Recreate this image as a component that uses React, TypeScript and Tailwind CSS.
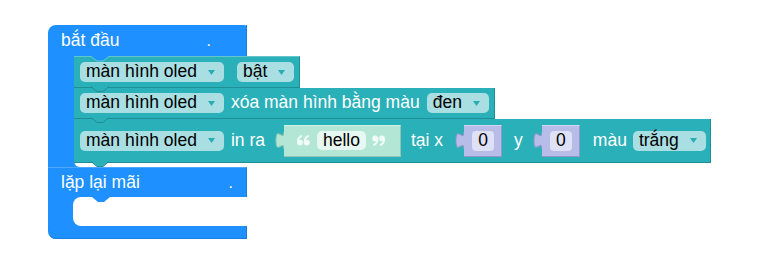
import React from "react";

function Arrow() {
  return (
    <svg width="7" height="5" viewBox="0 0 7 5" className="ml-[11px] shrink-0">
      <polygon points="0,0 7,0 3.5,5" fill="#29adb5" />
    </svg>
  );
}

function Dropdown({ label, className = "" }: { label: string; className?: string }) {
  return (
    <div
      className={
        "flex items-center h-[20px] rounded-[5px] bg-[#a9dfe2] pl-[6px] pr-[9px] text-[17.5px] text-black shrink-0 whitespace-nowrap " +
        className
      }
    >
      <span className="leading-none">{label}</span>
      <Arrow />
    </div>
  );
}

function Label({ text, className = "" }: { text: string; className?: string }) {
  return <span className={"text-white text-[17.5px] leading-none whitespace-nowrap shrink-0 " + className}>{text}</span>;
}

function TealNotch() {
  return (
    <svg className="absolute left-[17px] top-full -mt-[1px] z-10" width="18" height="6" viewBox="0 0 18 6">
      <polygon points="0,0 6,5.5 12,5.5 18,0" fill="#2ab0b8" />
      <polyline points="0,0.5 6,5.5 12,5.5 18,0.5" fill="none" stroke="#1f8f95" strokeWidth="1" />
    </svg>
  );
}

function Tab({ fill, stroke }: { fill: string; stroke: string }) {
  return (
    <div className="w-[8px] h-[32px] pt-[7px] shrink-0">
      <svg width="8" height="17" viewBox="0 0 8 15" preserveAspectRatio="none" className="overflow-visible">
        <path d="M8,0 C8,9 0,-6 0,7.5 C0,21 8,6 8,15 Z" fill={fill} />
        <path d="M8,0 C8,9 0,-6 0,7.5 C0,21 8,6 8,15" fill="none" stroke={stroke} strokeWidth="1" />
      </svg>
    </div>
  );
}

function Quote({ flip = false }: { flip?: boolean }) {
  return (
    <svg width="13" height="11" viewBox="0 0 13 11" className={flip ? "rotate-180 shrink-0" : "shrink-0"}>
      <circle cx="3" cy="7.6" r="2.9" fill="#f1fbf7" />
      <path d="M0.8,7.6 Q0.8,2.2 5,0.9" stroke="#f1fbf7" strokeWidth="2" fill="none" />
      <circle cx="9.8" cy="7.6" r="2.9" fill="#f1fbf7" />
      <path d="M7.6,7.6 Q7.6,2.2 11.8,0.9" stroke="#f1fbf7" strokeWidth="2" fill="none" />
    </svg>
  );
}

function StringBlock({ className = "" }: { className?: string }) {
  return (
    <div className={"flex items-start shrink-0 " + className}>
      <Tab fill="#b3e6d5" stroke="#8fc6b4" />
      <div className="flex items-center w-[117px] h-[32px] bg-[#b3e6d5] border-t border-t-[#d3f2e7] border-r border-b border-r-[#90c7b5] border-b-[#90c7b5] pl-[13px]">
        <Quote />
        <div className="ml-[7px] flex items-center justify-center w-[49px] h-[19px] rounded-[5px] bg-[#e7f7f1] text-[17.5px] text-black leading-none">
          hello
        </div>
        <div className="ml-[6px] flex">
          <Quote flip />
        </div>
      </div>
    </div>
  );
}

function NumberBlock({ className = "" }: { className?: string }) {
  return (
    <div className={"flex items-start shrink-0 " + className}>
      <Tab fill="#b8bce8" stroke="#9498c9" />
      <div className="flex items-center w-[38px] h-[32px] bg-[#b8bce8] border-t border-t-[#d4d7f3] border-r border-b border-r-[#9498c9] border-b-[#9498c9] pl-[8px]">
        <div className="flex items-center justify-center w-[22px] h-[20px] rounded-[4px] bg-[#dfe1f6] text-[17.5px] text-black leading-none">
          0
        </div>
      </div>
    </div>
  );
}

export default function App() {
  return (
    <div className="w-[774px] h-[261px] bg-white overflow-hidden font-['Liberation_Sans',Arial,sans-serif]">
      <div className="pl-[48px] pt-[25px]">
        <div className="w-[199px] bg-[#1e90ff] rounded-tl-[8px] rounded-tr-[3px] rounded-bl-[8px]">
          {/* hat bar */}
          <div className="h-[31px] flex items-center pl-[13px] border-r border-r-[#1a7ee0]">
            <Label text="bắt đầu" />
            <span className="ml-auto mr-[35px] text-white text-[16px] leading-none">.</span>
          </div>

          {/* statement area */}
          <div className="flex">
            <div className="w-[26px] shrink-0" />
            <div className="w-[173px] h-[111px] bg-white rounded-l-[6px] flex flex-col items-start">
              {/* block 1 */}
              <div className="relative flex items-center shrink-0 h-[32px] w-[226px] bg-[#2ab0b8] border-t border-t-[#62c6cc] border-r border-b border-r-[#1f8f95] border-b-[#1f8f95] pl-[6px]">
                <svg className="absolute left-[17px] -top-[1px]" width="18" height="6" viewBox="0 0 18 6">
                  <polygon points="0,0 6,5 12,5 18,0" fill="#1e90ff" />
                  <polyline points="0,0.5 6,5 12,5 18,0.5" fill="none" stroke="#62c6cc" strokeWidth="1" />
                </svg>
                <Dropdown label="màn hình oled" />
                <Dropdown label="bật" className="ml-[13px]" />
                <TealNotch />
              </div>
              {/* block 2 */}
              <div className="relative flex items-center shrink-0 h-[31px] w-[421px] bg-[#2ab0b8] border-r border-b border-r-[#1f8f95] border-b-[#1f8f95] pl-[6px]">
                <Dropdown label="màn hình oled" />
                <Label text="xóa màn hình bằng màu" className="ml-[7px]" />
                <Dropdown label="đen" className="ml-[7px]" />
                <TealNotch />
              </div>
              {/* block 3 */}
              <div className="relative flex items-center shrink-0 h-[44px] w-[637px] bg-[#2ab0b8] border-r border-b border-r-[#1f8f95] border-b-[#1f8f95] pl-[6px]">
                <Dropdown label="màn hình oled" />
                <Label text="in ra" className="ml-[7px]" />
                <StringBlock className="ml-[11px]" />
                <Label text="tại x" className="ml-[10px]" />
                <NumberBlock className="ml-[13px]" />
                <Label text="y" className="ml-[12px]" />
                <NumberBlock className="ml-[11px]" />
                <Label text="màu" className="ml-[13px]" />
                <Dropdown label="trắng" className="ml-[6px]" />
                <TealNotch />
              </div>
            </div>
          </div>

          {/* loop bar */}
          <div className="h-[30px] flex items-center pl-[13px] border-r border-r-[#1a7ee0] border-t border-t-[#4ea8ff]">
            <Label text="lặp lại mãi" />
            <span className="ml-auto mr-[13px] text-white text-[16px] leading-none">.</span>
          </div>
          <div className="flex">
            <div className="w-[25px] shrink-0" />
            <div className="relative flex-1 h-[29px] bg-white rounded-l-[8px]">
              <svg className="absolute left-[19px] top-0" width="18" height="6" viewBox="0 0 18 6">
                <polygon points="0,0 6,5 12,5 18,0" fill="#1e90ff" />
              </svg>
            </div>
          </div>
          <div className="h-[13px] border-r border-b border-r-[#1a7ee0] border-b-[#1a7ee0] rounded-bl-[8px]" />
        </div>
      </div>
    </div>
  );
}
